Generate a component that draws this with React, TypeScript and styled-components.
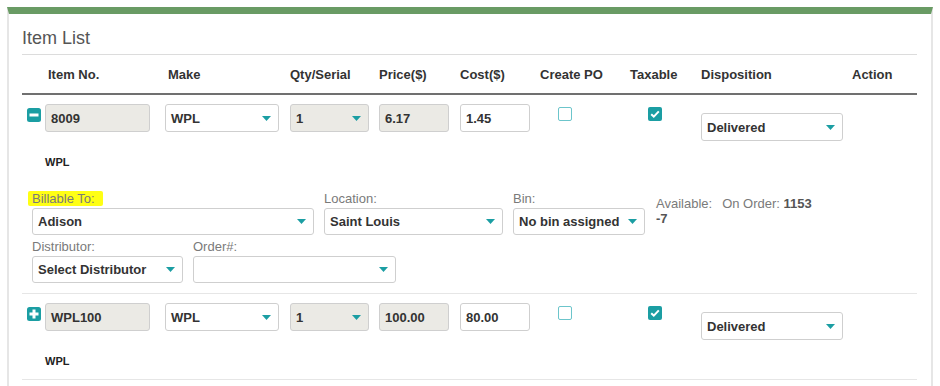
import React from "react";
import styled, { createGlobalStyle } from "styled-components";

const Global = createGlobalStyle`
  html, body { margin: 0; padding: 0; background: #fff; }
  body { font-family: "Liberation Sans", Arial, sans-serif; color: #333; }
`;

const TEAL = "#1b9ea3";
const COLS = "138px 125px 89px 81px 80px 90px 71px 151px 70px";

const Panel = styled.section`
  margin: 7px 0 0 7px;
  width: 926px;
  box-sizing: border-box;
  border-top: 7px solid #699b64;
  border-left: 2px solid #e6e6e6;
  border-right: 2px solid #e6e6e6;
  padding: 0 14px 60px 13px;
`;

const Title = styled.h2`
  margin: 0;
  padding: 13px 0 5px;
  font-size: 18px;
  line-height: 22px;
  font-weight: normal;
  color: #555;
  border-bottom: 1px solid #dcdcdc;
`;

const HeaderRow = styled.div`
  display: grid;
  grid-template-columns: ${COLS};
  height: 38px;
  align-items: center;
  border-bottom: 2px solid #707070;
`;

const HeaderCell = styled.div<{ $indent?: number }>`
  padding-left: ${(p) => 5 + (p.$indent ?? 0)}px;
  font-size: 13px;
  font-weight: bold;
  color: #333;
  white-space: nowrap;
`;

const ItemRow = styled.div`
  padding: 9px 0 10px;
  border-bottom: 1px solid #e6e6e6;
`;

const FieldGrid = styled.div`
  display: grid;
  grid-template-columns: ${COLS};
  align-items: start;
`;

const Cell = styled.div<{ $top?: number }>`
  display: flex;
  align-items: flex-start;
  padding-left: 5px;
  padding-top: ${(p) => p.$top ?? 0}px;
`;

const ToggleIcon = styled.svg`
  flex: none;
  width: 14px;
  height: 14px;
  margin: 4px 4px 0 0;
`;

const Box = styled.div<{ $w: number; $h?: number; $disabled?: boolean }>`
  box-sizing: border-box;
  width: ${(p) => p.$w}px;
  height: ${(p) => p.$h ?? 28}px;
  border: 1px solid #cfcfcf;
  border-radius: 3px;
  background: ${(p) => (p.$disabled ? "#ebeae5" : "#fff")};
  display: flex;
  align-items: center;
  justify-content: space-between;
  padding: 0 7px 0 5px;
  font-size: 13px;
  font-weight: bold;
  color: #333;
  white-space: nowrap;
`;

const Arrow = styled.svg`
  flex: none;
  width: 9px;
  height: 5px;
`;

const Check = styled.span<{ $checked?: boolean }>`
  display: inline-flex;
  align-items: center;
  justify-content: center;
  box-sizing: border-box;
  width: 14px;
  height: 14px;
  margin: 3px 0 0 18px;
  border-radius: 2px;
  border: ${(p) => (p.$checked ? "none" : "1.5px solid #6cc5cb")};
  background: ${(p) => (p.$checked ? TEAL : "#fff")};
`;

const SubLabel = styled.div`
  margin: 14px 0 0 23px;
  font-size: 11px;
  line-height: 15px;
  font-weight: bold;
  color: #222;
`;

const Details = styled.div`
  margin-top: 21px;
  padding-left: 10px;
  display: flex;
  flex-direction: column;
  gap: 4px;
`;

const DetailLine = styled.div`
  display: flex;
  gap: 10px;
  align-items: flex-start;
`;

const Field = styled.div`
  display: flex;
  flex-direction: column;
  gap: 2px;
`;

const Label = styled.span`
  font-size: 13px;
  line-height: 15px;
  color: #7a7a7a;
`;

const Highlight = styled.span`
  align-self: flex-start;
  margin-left: -4px;
  padding: 0 8px 0 4px;
  background: #ffff14;
  border-radius: 2px;
`;

const Stock = styled.div`
  padding: 5px 0 0 1px;
  font-size: 13px;
  line-height: 15px;
  color: #7a7a7a;
  b { color: #555; }
`;

const Spacer = styled.span`
  display: inline-block;
  width: 10px;
`;

const DropArrow = () => (
  <Arrow viewBox="0 0 9 5">
    <path d="M0 0 H9 L4.5 5 Z" fill={TEAL} />
  </Arrow>
);

const Select = ({ w, h, disabled, children }: { w: number; h?: number; disabled?: boolean; children?: React.ReactNode }) => (
  <Box $w={w} $h={h} $disabled={disabled}>
    <span>{children}</span>
    <DropArrow />
  </Box>
);

const Toggle = ({ open }: { open: boolean }) => (
  <ToggleIcon viewBox="0 0 14 14">
    <rect x="0" y="0" width="14" height="14" rx="2.5" fill={TEAL} />
    <rect x="2.5" y="5.5" width="9" height="3" fill="#fff" />
    {!open && <rect x="5.5" y="2.5" width="3" height="9" fill="#fff" />}
  </ToggleIcon>
);

const CheckMark = () => (
  <svg width="10" height="8" viewBox="0 0 10 8">
    <path d="M1.2 4.2 L3.8 6.6 L8.8 1.4" stroke="#fff" strokeWidth="2" fill="none" />
  </svg>
);

type Item = { no: string; price: string; cost: string; open: boolean };

const items: Item[] = [
  { no: "8009", price: "6.17", cost: "1.45", open: true },
  { no: "WPL100", price: "100.00", cost: "80.00", open: false },
];

const ItemFields = ({ item }: { item: Item }) => (
  <FieldGrid>
    <Cell>
      <Toggle open={item.open} />
      <Box $w={105} $disabled>{item.no}</Box>
    </Cell>
    <Cell>
      <Select w={114}>WPL</Select>
    </Cell>
    <Cell>
      <Select w={79} disabled>1</Select>
    </Cell>
    <Cell>
      <Box $w={70} $disabled>{item.price}</Box>
    </Cell>
    <Cell>
      <Box $w={70}>{item.cost}</Box>
    </Cell>
    <Cell>
      <Check />
    </Cell>
    <Cell>
      <Check $checked>
        <CheckMark />
      </Check>
    </Cell>
    <Cell $top={9}>
      <Select w={142}>Delivered</Select>
    </Cell>
    <Cell />
  </FieldGrid>
);

export default function App() {
  return (
    <>
      <Global />
      <Panel>
        <Title>Item List</Title>
        <HeaderRow>
          <HeaderCell $indent={21}>Item No.</HeaderCell>
          <HeaderCell $indent={3}>Make</HeaderCell>
          <HeaderCell>Qty/Serial</HeaderCell>
          <HeaderCell>Price($)</HeaderCell>
          <HeaderCell>Cost($)</HeaderCell>
          <HeaderCell>Create PO</HeaderCell>
          <HeaderCell>Taxable</HeaderCell>
          <HeaderCell>Disposition</HeaderCell>
          <HeaderCell>Action</HeaderCell>
        </HeaderRow>

        {items.map((item) => (
          <ItemRow key={item.no}>
            <ItemFields item={item} />
            <SubLabel>WPL</SubLabel>
            {item.open && (
              <Details>
                <DetailLine>
                  <Field>
                    <Label as={Highlight}>Billable To:</Label>
                    <Select w={282} h={27}>Adison</Select>
                  </Field>
                  <Field>
                    <Label>Location:</Label>
                    <Select w={179} h={27}>Saint Louis</Select>
                  </Field>
                  <Field>
                    <Label>Bin:</Label>
                    <Select w={132} h={27}>No bin assigned</Select>
                  </Field>
                  <Stock>
                    Available:<Spacer />On Order: <b>1153</b>
                    <br />
                    <b>-7</b>
                  </Stock>
                </DetailLine>
                <DetailLine>
                  <Field>
                    <Label>Distributor:</Label>
                    <Select w={151} h={27}>Select Distributor</Select>
                  </Field>
                  <Field>
                    <Label>Order#:</Label>
                    <Select w={203} h={27} />
                  </Field>
                </DetailLine>
              </Details>
            )}
          </ItemRow>
        ))}
      </Panel>
    </>
  );
}
